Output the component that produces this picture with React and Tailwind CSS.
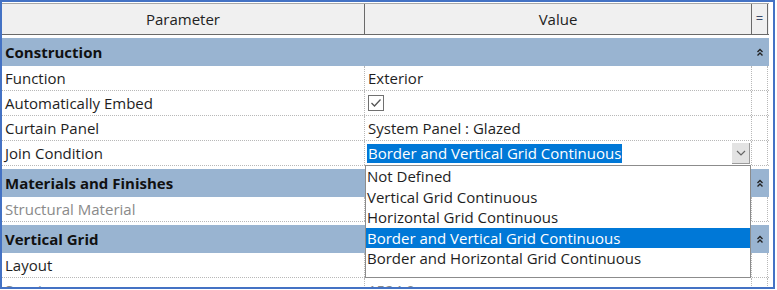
import React from 'react';

const font = { fontFamily: '"Open Sans", "Noto Sans", sans-serif' };

function Collapse() {
    return (
        <svg width="8" height="9" viewBox="0 0 8 9" className="mx-auto">
            <path d="M1.5 4 L4 1.5 L6.5 4" fill="none" stroke="#222" strokeWidth="1.4" />
            <path d="M1.5 7.5 L4 5 L6.5 7.5" fill="none" stroke="#222" strokeWidth="1.4" />
        </svg>
    );
}

function GroupRow({ title }) {
    return (
        <div className="pt-[3px] bg-white">
            <div className="flex h-[28px] bg-[#99b4d1] items-center">
                <div className="w-[750px] pl-[3px] font-bold text-[15px] text-[#111]">{title}</div>
                <div className="w-[16px] flex items-center">
                    <Collapse />
                </div>
            </div>
        </div>
    );
}

function Row({ name, value, muted, children }) {
    return (
        <div className="flex h-[25px] border-b border-dotted border-[#b8b8b8]">
            <div className={`w-[363px] pl-[3px] flex items-center border-r border-dotted border-[#b8b8b8] text-[15px] ${muted ? 'text-[#8a8a8a]' : 'text-[#1e1e1e]'}`}>
                {name}
            </div>
            <div className={`w-[387px] pl-[3px] flex items-center border-r border-dotted border-[#b8b8b8] text-[15px] ${muted ? 'text-[#8a8a8a]' : 'text-[#1e1e1e]'}`}>
                {children || value}
            </div>
            <div className="w-[16px] border-r border-dotted border-[#b8b8b8]"></div>
        </div>
    );
}

function Checkbox() {
    return (
        <div className="w-[16px] h-[16px] border border-[#707070] bg-white flex items-center justify-center">
            <svg width="12" height="12" viewBox="0 0 12 12">
                <path d="M1.5 6 L4.5 9 L10.5 2.5" fill="none" stroke="#555" strokeWidth="1.3" />
            </svg>
        </div>
    );
}

const options = [
    'Not Defined',
    'Vertical Grid Continuous',
    'Horizontal Grid Continuous',
    'Border and Vertical Grid Continuous',
    'Border and Horizontal Grid Continuous',
];

export default function App() {
    const selected = 'Border and Vertical Grid Continuous';

    return (
        <div className="w-[777px] h-[290px] bg-white overflow-hidden" style={font}>
            <div className="relative w-[775px] h-[289px] border-2 border-[#4472c4] bg-white overflow-hidden">
                <div className="w-[767px]">
                    <div className="h-[1px] bg-white"></div>
                    {/* header */}
                    <div className="flex h-[32px] bg-[#f0f0f0] border-t border-b border-t-[#a8a8a8] border-b-[#6a6a6a] text-[15px] text-[#222]">
                        <div className="w-[363px] flex items-center justify-center border-r border-[#6a6a6a]">Parameter</div>
                        <div className="w-[387px] flex items-center justify-center border-r border-[#6a6a6a]">Value</div>
                        <div className="w-[16px] flex items-center justify-center border-r border-[#6a6a6a] text-[13px] text-[#3a4a6a]">=</div>
                    </div>

                    <GroupRow title="Construction" />
                    <Row name="Function" value="Exterior" />
                    <Row name="Automatically Embed">
                        <Checkbox />
                    </Row>
                    <Row name="Curtain Panel" value="System Panel : Glazed" />
                    <div className="flex h-[25px] border-b border-dotted border-[#b8b8b8]">
                        <div className="w-[363px] pl-[3px] flex items-center border-r border-dotted border-[#b8b8b8] text-[15px] text-[#1e1e1e]">
                            Join Condition
                        </div>
                        <div className="w-[387px] flex items-center justify-between pl-[2px] pr-[1px] border-r border-dotted border-[#b8b8b8] bg-white">
                            <span className="bg-[#0078d7] text-white text-[15px] leading-[19px] px-[1px]">{selected}</span>
                            <div className="w-[18px] h-[21px] bg-[#e3e3e3] border-r border-b border-[#9a9a9a] flex items-center justify-center">
                                <svg width="10" height="6" viewBox="0 0 10 6">
                                    <path d="M1 1 L5 5 L9 1" fill="none" stroke="#666" strokeWidth="1.2" />
                                </svg>
                            </div>
                        </div>
                        <div className="w-[16px] border-r border-dotted border-[#b8b8b8]"></div>
                    </div>

                    <GroupRow title="Materials and Finishes" />
                    <Row name="Structural Material" value="" muted />
                    <GroupRow title="Vertical Grid" />
                    <Row name="Layout" value="" />
                    <Row name="Spacing" value="1524.0" muted />
                </div>

                {/* open dropdown list */}
                <div className="absolute left-[363px] top-[163px] w-[386px] h-[113px] bg-white border border-[#8c8c8c] text-[15px] text-[#1e1e1e]">
                    {options.map((opt) => (
                        <div
                            key={opt}
                            className={`h-[20.5px] flex items-center pl-[1px] ${opt === selected ? 'bg-[#0078d7] text-white' : ''}`}
                        >
                            {opt}
                        </div>
                    ))}
                </div>
            </div>
        </div>
    );
}
